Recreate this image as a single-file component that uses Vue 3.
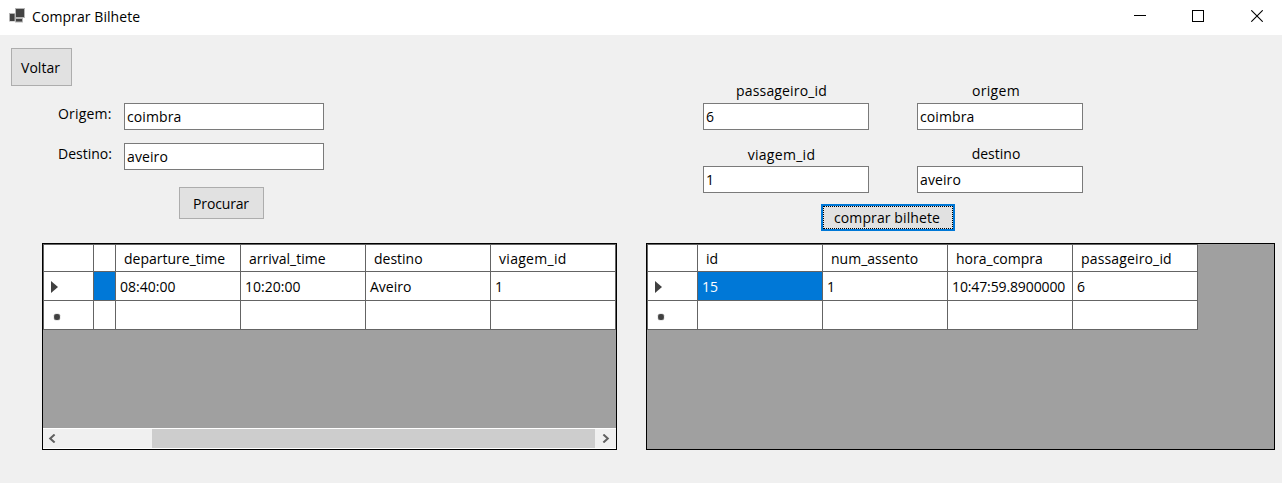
<script setup>
import { ref } from 'vue'

const origem = ref('coimbra')
const destino = ref('aveiro')

const ticket = ref([
  { key: 'passageiro_id', value: '6' },
  { key: 'origem', value: 'coimbra' },
  { key: 'viagem_id', value: '1' },
  { key: 'destino', value: 'aveiro' },
])

const grids = [
  {
    name: 'trips',
    columns: ['', 'departure_time', 'arrival_time', 'destino', 'viagem_id'],
    row: ['', '08:40:00', '10:20:00', 'Aveiro', '1'],
    scroll: true,
  },
  {
    name: 'tickets',
    columns: ['id', 'num_assento', 'hora_compra', 'passageiro_id'],
    row: ['15', '1', '10:47:59.8900000', '6'],
    scroll: false,
  },
]
</script>

<template>
  <div class="window">
    <header class="titlebar">
      <svg class="app-icon" width="16" height="15" viewBox="0 0 16 15">
        <path d="M0 5H6V0H16V10H14V14.5H6V13.5H0Z" fill="#b5b5b5" />
        <rect x="1" y="6" width="4.5" height="7" fill="#424242" />
        <rect x="7" y="1" width="8" height="8" fill="#424242" />
        <rect x="7" y="11" width="6" height="2.5" fill="#424242" />
      </svg>
      <h1 class="title">Comprar Bilhete</h1>
      <div class="controls">
        <svg width="12" height="12" viewBox="0 0 12 12"><path d="M0 5.5H12" stroke="#000" /></svg>
        <svg width="12" height="12" viewBox="0 0 12 12"><rect x=".5" y=".5" width="11" height="11" fill="none" stroke="#000" /></svg>
        <svg width="12" height="12" viewBox="0 0 12 12"><path d="M.3 .3L11.7 11.7M11.7 .3L.3 11.7" stroke="#000" stroke-width="1.1" /></svg>
      </div>
    </header>

    <main class="forms">
      <section class="search">
        <button class="btn back">Voltar</button>
        <label class="field"><span class="caption wide">Origem:</span><input v-model="origem" class="box" spellcheck="false" /></label>
        <label class="field"><span class="caption">Destino:</span><input v-model="destino" class="box" spellcheck="false" /></label>
        <button class="btn find">Procurar</button>
      </section>
      <section class="purchase">
        <div class="ticket">
          <label v-for="f in ticket" :key="f.key" class="stack">
            <span class="name" :class="f.key">{{ f.key }}</span>
            <input v-model="f.value" class="box" spellcheck="false" />
          </label>
        </div>
        <button class="btn buy"><span class="focus">comprar bilhete</span></button>
      </section>
    </main>

    <div class="grids">
      <div v-for="g in grids" :key="g.name" class="view" :class="g.name">
        <div class="table">
          <div class="cell head"></div>
          <div v-for="c in g.columns" :key="c" class="cell head"><span :class="c">{{ c }}</span></div>
          <div class="cell mark">
            <svg class="arrow" width="7" height="12" viewBox="0 0 7 12"><path d="M0 0L7 6L0 12Z" fill="#404040" /></svg>
          </div>
          <div v-for="(v, i) in g.row" :key="i" class="cell" :class="{ selected: i === 0 }"><span :class="{ long: v.length > 8 }">{{ v }}</span></div>
          <div class="cell mark">
            <svg class="star" width="8" height="8" viewBox="0 0 8 8"><rect x=".8" y=".8" width="6.4" height="6.4" rx="1.5" fill="#a8a8a8" /><circle cx="4" cy="4" r="2.9" fill="#404040" /></svg>
          </div>
          <div v-for="c in g.columns" :key="'new-' + c" class="cell"></div>
        </div>
        <div v-if="g.scroll" class="scrollbar">
          <div class="step"><svg width="8" height="9" viewBox="0 0 8 9"><path d="M6.6 .5L2.2 4.5L6.6 8.5" fill="none" stroke="#606060" stroke-width="2" /></svg></div>
          <div class="thumb"></div>
          <div class="step next"><svg width="8" height="9" viewBox="0 0 8 9"><path d="M1.4 .5L5.8 4.5L1.4 8.5" fill="none" stroke="#606060" stroke-width="2" /></svg></div>
        </div>
      </div>
    </div>
  </div>
</template>

<style>
body { background: #f0f0f0; }
</style>

<style scoped>
.window {
  width: 1282px;
  height: 483px;
  overflow: hidden;
  background: #f0f0f0;
  color: #000;
  font: 14px/20px "Open Sans", "Noto Sans", sans-serif;
}
.window *, .window { box-sizing: border-box; }
svg { display: block; flex: none; }
input, button { font: inherit; color: inherit; margin: 0; border-radius: 0; outline: none; }

.titlebar { display: flex; height: 35px; background: #fff; padding-left: 9px; }
.app-icon { margin-top: 8px; }
.title { margin: 7px 0 0 7px; font-size: 14px; font-weight: 400; line-height: 20px; letter-spacing: .08px; }
.controls { display: flex; gap: 47px; margin: 10px 19px 0 auto; }
.controls svg:first-child { margin-right: -1px; }

.forms { display: flex; height: 208px; }
.search { width: 703px; padding: 13px 0 0 11px; }
.btn { display: block; padding: 0; border: 1px solid #adadad; background: #e1e1e1; text-align: center; }
.back { width: 61px; height: 38px; margin-bottom: 17px; padding: 2px 2px 0 0; }
.field { display: flex; height: 27px; margin-bottom: 13px; }
.caption { width: 113px; padding: 1px 0 0 47px; white-space: nowrap; }
.caption.wide { letter-spacing: .2px; }
.box { width: 200px; height: 27px; border: 1px solid #7a7a7a; background: #fff; padding: 0 2px; line-height: 20px; letter-spacing: .1px; }
.find { width: 85px; height: 32px; margin: 17px 0 0 168px; padding: 2px 1px 0 0; letter-spacing: -.15px; }

.ticket { display: grid; grid-template-columns: 166px 166px; column-gap: 48px; row-gap: 14px; padding-top: 46px; }
.stack { display: flex; flex-direction: column; height: 49px; }
.stack .box { width: 166px; margin-top: 2px; }
.stack .name { height: 20px; text-align: center; white-space: nowrap; }
.stack .passageiro_id { padding-right: 9px; }
.stack .viagem_id { padding: 1px 9px 0 0; }
.stack .origem, .stack .destino { padding-right: 8px; }
.passageiro_id { letter-spacing: .15px; }
.viagem_id, .origem { letter-spacing: .3px; }
.buy { width: 134px; height: 27px; margin: 11px 0 0 118px; border: 2px solid #0078d7; }
.focus { display: block; height: 23px; border: 1px dotted #000; line-height: 21px; padding-right: 2px; letter-spacing: .1px; }

.grids { display: flex; gap: 29px; padding-left: 42px; }
.view { display: flex; flex-direction: column; height: 207px; border: 1px solid #000; background: #a0a0a0; }
.trips { width: 575px; }
.tickets { width: 629px; }
.table {
  display: grid;
  width: max-content;
  grid-template-rows: 27px 29px 29px;
  border: solid #646464;
  border-width: 1px 0 0 1px;
}
.trips .table { grid-template-columns: 50px 22px repeat(4, 125px); }
.tickets .table { grid-template-columns: 50px repeat(4, 125px); }
.cell {
  border: solid #646464;
  border-width: 0 1px 1px 0;
  background: #fff;
  padding: 5px 0 0 4px;
  overflow: hidden;
  white-space: nowrap;
}
.head { padding: 4px 0 0 8px; }
.long { letter-spacing: -.12px; }
.selected { background: #0078d7; color: #fff; }
.mark { padding: 0; }
.arrow { margin: 9px 0 0 7px; }
.star { margin: 12px 0 0 9px; }

.scrollbar { display: flex; height: 21px; margin-top: auto; border: solid #fff; border-width: 1px 0; background: #f0f0f0; }
.step { width: 109px; padding: 5px 0 0 5px; }
.thumb { width: 443px; background: #cdcdcd; }
.next { width: 21px; padding-left: 7px; }
</style>
